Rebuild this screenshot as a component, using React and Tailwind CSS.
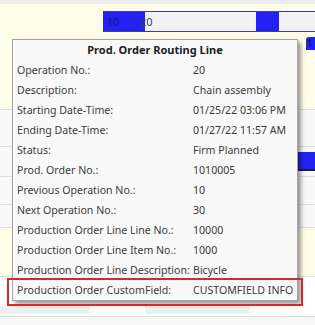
import React from "react";

const rows = [
  ["Operation No.:", "20"],
  ["Description:", "Chain assembly"],
  ["Starting Date-Time:", "01/25/22 03:06 PM"],
  ["Ending Date-Time:", "01/27/22 11:57 AM"],
  ["Status:", "Firm Planned"],
  ["Prod. Order No.:", "1010005"],
  ["Previous Operation No.:", "10"],
  ["Next Operation No.:", "30"],
  ["Production Order Line Line No.:", "10000"],
  ["Production Order Line Item No.:", "1000"],
  ["Production Order Line Description:", "Bicycle"],
  ["Production Order CustomField:", "CUSTOMFIELD INFO"],
];

export default function App() {
  return (
    <div className="relative w-[315px] h-[325px] overflow-hidden bg-[#f7f7f7] font-['Noto_Sans',sans-serif]">
      {/* gantt background */}
      <div className="flex flex-col">
        <div className="h-[4px] bg-[#ececec]" />
        <div className="h-[106px] bg-[#fffde8] border-b border-[#d9d9d9] pt-[7px]">
          <div className="ml-[103px] h-[21px] flex border-y border-[#3c3ca8] bg-[#f2f2f6] text-[11px] leading-[19px]">
            <div className="w-[42px] bg-[#2222f2] pl-[4px] text-[#1a1a70]">10</div>
            <div className="-ml-[5px] text-[#444]">20</div>
            <div className="ml-[103px] w-[23px] bg-[#2222f2]" />
          </div>
          <div className="flex justify-end mt-[5px]">
            <div className="w-[9px] h-[13px] bg-[#2222f2] rounded-tl-[3px] text-[10px] leading-[13px] pl-[1px] text-[#111]">1</div>
          </div>
        </div>
        <div className="h-[37px] border-b border-[#dedede] bg-[#f8f8f8]" />
        <div className="h-[30px] border-b border-[#dedede] bg-[#f8f8f8] pt-[5px]">
          <div className="ml-[200px] h-[19px] bg-[#2222f2] border-b-2 border-[#1a1a50]" />
        </div>
        <div className="h-[28px] border-b border-[#dedede] bg-[#f8f8f8]" />
        <div className="h-[23px] border-b border-[#dedede] bg-[#f8f8f8]" />
        <div className="h-[49px] border-b border-[#dedede] bg-[#fffde8]" />
        <div className="h-[40px] border-b border-[#dedede] bg-white flex items-end gap-[55px] pb-[2px]">
          <div className="w-[90px] h-[8px] bg-[#efefef]" />
          <div className="w-[105px] h-[8px] bg-[#efefef]" />
        </div>
      </div>

      {/* tooltip */}
      <div className="absolute left-[12px] top-[39px] w-[286px] h-[262px] bg-[#f9f9f9] border border-[#a3a3a3] shadow-[3px_3px_4px_rgba(0,0,0,0.4)] text-[10.6px] text-[#3a3a3a]">
        <div className="h-[20px] leading-[20px] text-center font-bold text-[11px] text-[#1c1c1c]">
          Prod. Order Routing Line
        </div>
        <div className="grid grid-cols-[176px_1fr] pl-[4px]">
          {rows.map(([label, value]) => (
            <React.Fragment key={label}>
              <div className="h-[20px] leading-[20px] whitespace-nowrap">{label}</div>
              <div className="h-[20px] leading-[20px] whitespace-nowrap">{value}</div>
            </React.Fragment>
          ))}
        </div>
      </div>

      {/* highlight */}
      <div className="absolute left-[7px] top-[278px] w-[296px] h-[28px] border-2 border-[#d52a2a]" />
    </div>
  );
}
